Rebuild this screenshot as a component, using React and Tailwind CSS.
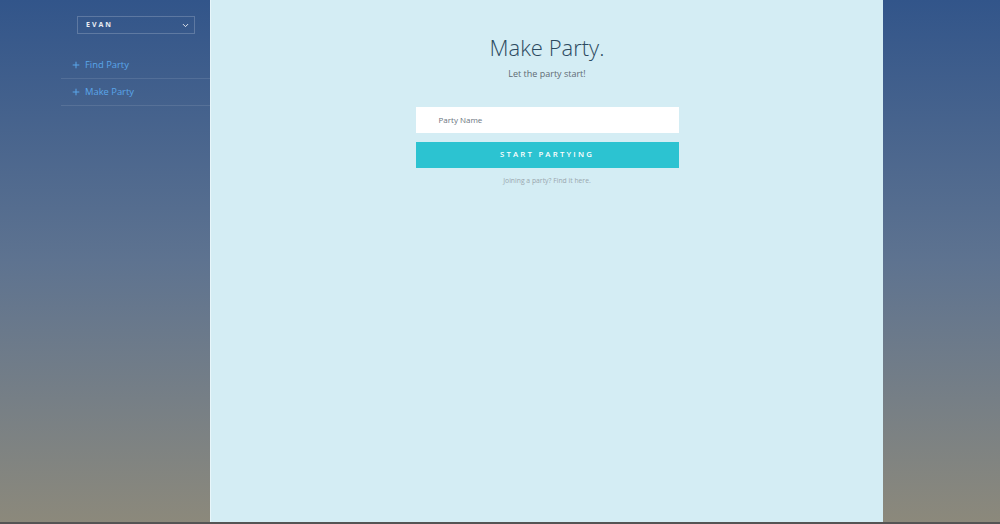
import { ChevronDown, Plus } from "lucide-react";

const NavItem = ({ label }) => (
  <div className="flex items-center h-[27px] pl-[10px] border-b border-white/10 text-[#5aa6ea] text-[9.4px]">
    <Plus size={10} strokeWidth={2.4} className="mr-[4px]" />
    <span>{label}</span>
  </div>
);

const App = () => {
  return (
    <div
      className="h-[524px] w-[1000px] flex flex-col bg-gradient-to-b from-[#32558a] via-[#5e7390] to-[#8c897b] overflow-hidden"
      style={{ fontFamily: '"Open Sans", "Liberation Sans", sans-serif' }}
    >
      <div className="flex flex-1">
        <div className="w-[210px] pl-[61px] pt-[16px]">
          <div className="ml-[16px] w-[118px] h-[18px] border border-white/20 flex items-center justify-between pl-[8px] pr-[4px] text-white/90">
            <span className="text-[7px] font-bold tracking-[2px]">EVAN</span>
            <ChevronDown size={9} strokeWidth={2.5} />
          </div>
          <div className="mt-[18px]">
            <NavItem label="Find Party" />
            <NavItem label="Make Party" />
          </div>
        </div>

        <div className="w-[673px] bg-[#d4edf4] border-l border-[#e8f6fa] flex flex-col items-center pt-[33px]">
          <h1 className="text-[22px] font-light text-[#2c4a60] leading-[28px]">Make Party.</h1>
          <p className="text-[9px] text-[#5f6b73] mt-[6px]">Let the party start!</p>
          <div className="w-[263px] h-[26px] bg-white mt-[26px] flex items-center pl-[23px] text-[8px] text-[#6b7680]">
            Party Name
          </div>
          <button className="w-[263px] h-[26px] bg-[#2cc3d1] mt-[9px] text-white text-[7.8px] font-semibold tracking-[2.2px]">
            START PARTYING
          </button>
          <p className="text-[6.8px] text-[#9aa7ae] mt-[8px]">Joining a party? Find it here.</p>
        </div>

        <div className="flex-1" />
      </div>
      <div className="h-[2px] bg-[#545454]" />
    </div>
  );
};

export default App;
